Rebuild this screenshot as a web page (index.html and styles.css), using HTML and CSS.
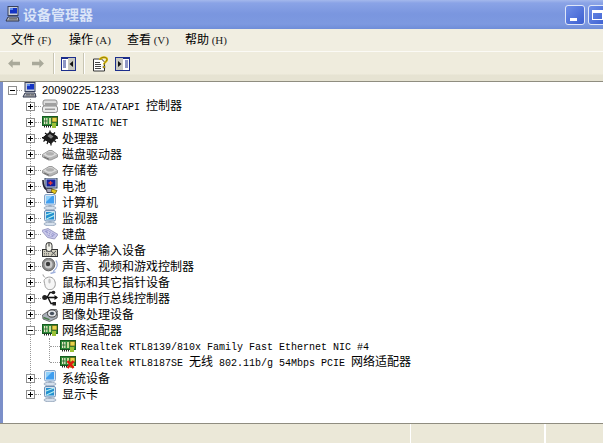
FILE: index.html
```html
<!DOCTYPE html>
<html lang="zh">
<head>
<meta charset="utf-8">
<title>设备管理器</title>
<link rel="stylesheet" href="styles.css">
</head>
<body>
<svg class="defs" width="0" height="0" aria-hidden="true">
  <symbol id="i-pc" viewBox="0 0 16 16"><rect x="3" y="0.500" width="10" height="9" fill="#c9cfdc" stroke="#39425c"/><rect x="5" y="2" width="7" height="5.500" fill="#1434c4"/><rect x="5" y="2" width="3" height="2" fill="#5f8cf0"/><path d="M1 15l2-4h10l1 4z" fill="#b9bdc8" stroke="#30364a"/><path d="M4 12.500h8M3.500 13.800h9" stroke="#555" stroke-width=".7"/></symbol>
  <symbol id="i-ide" viewBox="0 0 16 16"><rect x="1" y="2" width="14" height="6" rx="2" fill="#dcdcdc" stroke="#8c8c8c"/><rect x="0.500" y="8" width="15" height="6.500" rx="2" fill="#eaeaea" stroke="#8c8c8c"/><rect x="3" y="5" width="11" height="2" fill="#a0a0a0"/><rect x="3" y="10.500" width="10" height="1.500" fill="#9a9a9a"/></symbol>
  <symbol id="i-net" viewBox="0 0 16 16"><rect x="0.500" y="2.500" width="15" height="9" fill="#2f8a3a" stroke="#165c20"/><rect x="2" y="4" width="3.500" height="6" fill="#e6edc8"/><path d="M3.700 4v6M2 7h3.500" stroke="#1a5a22" stroke-width=".8"/><rect x="7" y="4" width="2" height="6" fill="#c9dc9a"/><rect x="10" y="3.500" width="5" height="4.500" fill="#e8d24a" stroke="#5a5a10" stroke-width=".7"/><path d="M2 12.500h11" stroke="#222" stroke-width="2" stroke-dasharray="1 1"/><rect x="10" y="9" width="4" height="5" fill="#9cc238"/></symbol>
  <symbol id="i-netx" viewBox="0 0 16 16"><use href="#i-net"/><path d="M7.500 7l6 7M13.500 7l-6 7" stroke="#e01a10" stroke-width="2.400"/></symbol>
  <symbol id="i-cpu" viewBox="0 0 16 16"><path d="M8 2l7.500 5-6.500 6.500-8.500-5.500z" fill="#1c1c1c" stroke="#111"/><path d="M5 4.500L3 3M8 2.500V.5M11 4.500L13 2.500M14 8l2 .5M12 10.500l2 1.500M9 13v2.500M6 11.500L5 14M3.500 9.500L1.500 11.500M1 7.500H-.5" stroke="#111" stroke-width="1.200"/><path d="M5.500 6l2.500-2 3.500 2.500-2.500 2.200z" fill="#808080"/></symbol>
  <symbol id="i-disk" viewBox="0 0 16 16"><path d="M0.500 8.500L7 4.500h3l5.500 4v2.500L9 14H6.500L.5 11z" fill="#b4b4b4" stroke="#8a8a8a" stroke-width=".8"/><path d="M1 8.500L7 5.200h3l5 3.300-6 2.800H6.500z" fill="#dcdcdc"/><ellipse cx="8" cy="7.800" rx="4" ry="1.800" fill="#b0b0b0"/><path d="M2 11l5 2.200" stroke="#6a6a6a"/></symbol>
  <symbol id="i-batt" viewBox="0 0 16 16"><rect x="3" y="0" width="12" height="10" fill="#c8d4e6" stroke="#30405c"/><rect x="4.500" y="1.500" width="9" height="7" fill="#14209c"/><path d="M8.500 3v4M6.500 5h4" stroke="#e63a3a" stroke-width="1.300"/><path d="M1 2c0 5 2 9 4 10l3 1.500" fill="none" stroke="#223" stroke-width="1.600"/><path d="M4.500 10.500H10l1 4H5z" fill="#a8a8b8" stroke="#445"/><path d="M10 11l5 1.500-2 3.500-4-2.500z" fill="#e8c81c" stroke="#5a4a00" stroke-width=".7"/></symbol>
  <symbol id="i-comp" viewBox="0 0 16 16"><rect x="2.500" y="0.500" width="11" height="10.500" rx="1.500" fill="#d8e6f4" stroke="#86a4c8"/><path d="M4 2h8v7.500H4z" fill="#3f9ef0"/><path d="M4 2h6L4 8z" fill="#8fd0fa"/><rect x="6.500" y="11" width="3" height="2" fill="#9db0c6"/><ellipse cx="8" cy="14" rx="6" ry="1.800" fill="#d6e0ec" stroke="#8a9db4" stroke-width=".8"/></symbol>
  <symbol id="i-mon" viewBox="0 0 16 16"><rect x="2.500" y="0.500" width="11" height="10.500" rx="1.500" fill="#d5e2f0" stroke="#6f8fb4"/><path d="M4 2h8v7.500H4z" fill="#2290d0"/><path d="M4 5L12 2M4.500 9L12 5.500" stroke="#b8f0f0" stroke-width="1.200"/><rect x="6.500" y="11" width="3" height="2" fill="#9db0c6"/><ellipse cx="8" cy="14" rx="6" ry="1.800" fill="#d6e0ec" stroke="#8a9db4" stroke-width=".8"/></symbol>
  <symbol id="i-kbd" viewBox="0 0 16 16"><path d="M-.5 4.500L6 2.500l10 6-3.500 4.500-7-1.500z" fill="#c8c8ea" stroke="#8c8cb8" stroke-width=".8"/><path d="M2.500 5l3.500-1 7 4.500-2.500 2.500-4.500-1z" fill="#9c9cd0"/><path d="M3 6.500l7 3.500M5 5l6.500 4M7 4.500L6 9.500M9.500 6L8 10.500" stroke="#ececfa" stroke-width=".5"/></symbol>
  <symbol id="i-hid" viewBox="0 0 16 16"><rect x="0.500" y="7.500" width="15" height="7" fill="#cfccbc" stroke="#333"/><path d="M2 9.500h5M2 11.500h5M2 13h5" stroke="#777" stroke-dasharray="1 1"/><path d="M9 9l5 4.500M9 13.500l5-4.500" stroke="#555"/><rect x="4" y="0.500" width="6" height="9" rx="2.800" fill="#f2f2ea" stroke="#333"/><path d="M7 .5v4" stroke="#333"/></symbol>
  <symbol id="i-snd" viewBox="0 0 16 16"><circle cx="6.500" cy="6.500" r="6.300" fill="#8a8a8a" stroke="#666"/><circle cx="6.500" cy="6.500" r="4" fill="#c9c9c9"/><circle cx="6" cy="6" r="2.200" fill="#3c3c3c"/><path d="M14 2.500c2 3.500 1.500 8-3 11M8.500 15.500l5-1.500" fill="none" stroke="#9fb0dc" stroke-width="1.400"/></symbol>
  <symbol id="i-mouse" viewBox="0 0 16 16"><path d="M2.500 5.500c3-3.500 7.500-3 9.500 0s2 7.500-1.500 9.500-7-.5-7.500-3.500S1.500 7 2.500 5.500z" fill="#f6f6f6" stroke="#9c9c9c"/><ellipse cx="7.500" cy="7" rx="1.200" ry="2.500" fill="#c0c0c0"/><path d="M3 3.500C2 2.500 1 1.500 1 .5" fill="none" stroke="#8a8a8a"/></symbol>
  <symbol id="i-usb" viewBox="0 0 16 16"><path d="M1 7.500h14" stroke="#111" stroke-width="1.600"/><path d="M16 7.500L12.500 5v5z" fill="#111"/><circle cx="2.700" cy="7.500" r="2.500" fill="#222"/><path d="M5 7.500l3-5h3M6 7.500l3 6h2.500" fill="none" stroke="#111" stroke-width="1.400"/><circle cx="11.500" cy="2.500" r="1.800" fill="#222"/><rect x="10.500" y="12" width="3.500" height="3.500" fill="#222"/></symbol>
  <symbol id="i-cam" viewBox="0 0 16 16"><path d="M.5 9l8.500-5.500h5.500l1.500 3-1 5.500-7.500 3.500-6.500-2.500z" fill="#aab0ba" stroke="#555" stroke-width=".8"/><ellipse cx="10" cy="7.500" rx="4.500" ry="3.600" fill="#e4e6ea" stroke="#444"/><ellipse cx="10" cy="7.500" rx="2.200" ry="1.800" fill="#48525f"/><path d="M1.500 11.500l6 2.200" stroke="#4a7a4a" stroke-width="1.400"/></symbol>
  <symbol id="i-back" viewBox="0 0 14 12"><path d="M0 6l5-5v3h8v4H5v3z" fill="#a9a99a"/></symbol>
  <symbol id="i-fwd" viewBox="0 0 14 12"><path d="M14 6L9 1v3H1v4h8v3z" fill="#a9a99a"/></symbol>
  <symbol id="i-pane-l" viewBox="0 0 15 14"><rect x="0.500" y="0.500" width="14" height="13" fill="#fff" stroke="#1c2e8c"/><rect x="0" y="0" width="15" height="2" fill="#1c2e8c"/><rect x="7" y="1" width="7" height="12" fill="#c8c8c0"/><path d="M2 4h3M2 6h3M2 8h3M2 10h3" stroke="#1c2e8c"/><path d="M12 4v6L8.500 7z" fill="#111"/></symbol>
  <symbol id="i-pane-r" viewBox="0 0 15 14"><rect x="0.500" y="0.500" width="14" height="13" fill="#fff" stroke="#1c2e8c"/><rect x="0" y="0" width="15" height="2" fill="#1c2e8c"/><rect x="1" y="1" width="7" height="12" fill="#c8c8c0"/><path d="M10 4h3M10 6h3M10 8h3M10 10h3" stroke="#1c2e8c"/><path d="M3 4v6L6.500 7z" fill="#111"/></symbol>
  <symbol id="i-help" viewBox="0 0 16 16"><path d="M1.500 3.500h8l3 3V15.500h-11z" fill="#fff" stroke="#333"/><path d="M3 7h5M3 9h6M3 11h6M3 13h6" stroke="#444"/><path d="M8 4.500C8 1.500 15 .5 15 4c0 2.500-3 2.500-3 5" fill="none" stroke="#e8c400" stroke-width="2.200"/><path d="M8 4.500C8 1.500 15 .5 15 4c0 2.500-3 2.500-3 5" fill="none" stroke="#333" stroke-width=".5"/><rect x="11" y="10.500" width="2" height="2" fill="#e8c400" stroke="#333" stroke-width=".4"/></symbol>
</svg>

<div class="window">
  <header class="titlebar">
    <svg class="ico"><use href="#i-pc"/></svg>
    <span class="title">设备管理器</span>
    <div class="winbtns">
      <button class="winbtn" type="button"><span class="glyph-min"></span></button>
      <button class="winbtn winbtn-max" type="button"><span class="glyph-max"></span></button>
    </div>
  </header>

  <nav class="menubar">
    <span class="menu">文件 <span class="key">(F)</span></span>
    <span class="menu">操作 <span class="key">(A)</span></span>
    <span class="menu">查看 <span class="key">(V)</span></span>
    <span class="menu">帮助 <span class="key">(H)</span></span>
  </nav>

  <div class="toolbar">
    <svg class="tb-arrow"><use href="#i-back"/></svg>
    <svg class="tb-arrow tb-arrow-2"><use href="#i-fwd"/></svg>
    <span class="tb-sep"></span>
    <svg class="tb-icon"><use href="#i-pane-l"/></svg>
    <span class="tb-sep tb-sep-2"></span>
    <svg class="tb-help"><use href="#i-help"/></svg>
    <svg class="tb-icon tb-icon-last"><use href="#i-pane-r"/></svg>
  </div>

  <main class="tree">
    <span class="vline"></span>
    <span class="vline-sub"></span>

    <div class="row row-root"><span class="exp exp-minus"></span><span class="dots dots-root"></span><svg class="ico"><use href="#i-pc"/></svg><span class="label label-root">20090225-1233</span></div>

    <div class="row"><span class="exp"></span><span class="dots"></span><svg class="ico"><use href="#i-ide"/></svg><span class="label"><span class="lat">IDE ATA/ATAPI </span>控制器</span></div>
    <div class="row"><span class="exp"></span><span class="dots"></span><svg class="ico"><use href="#i-net"/></svg><span class="label"><span class="lat">SIMATIC NET</span></span></div>
    <div class="row"><span class="exp"></span><span class="dots"></span><svg class="ico"><use href="#i-cpu"/></svg><span class="label">处理器</span></div>
    <div class="row"><span class="exp"></span><span class="dots"></span><svg class="ico"><use href="#i-disk"/></svg><span class="label">磁盘驱动器</span></div>
    <div class="row"><span class="exp"></span><span class="dots"></span><svg class="ico"><use href="#i-disk"/></svg><span class="label">存储卷</span></div>
    <div class="row"><span class="exp"></span><span class="dots"></span><svg class="ico"><use href="#i-batt"/></svg><span class="label">电池</span></div>
    <div class="row"><span class="exp"></span><span class="dots"></span><svg class="ico"><use href="#i-comp"/></svg><span class="label">计算机</span></div>
    <div class="row"><span class="exp"></span><span class="dots"></span><svg class="ico"><use href="#i-mon"/></svg><span class="label">监视器</span></div>
    <div class="row"><span class="exp"></span><span class="dots"></span><svg class="ico"><use href="#i-kbd"/></svg><span class="label">键盘</span></div>
    <div class="row"><span class="exp"></span><span class="dots"></span><svg class="ico"><use href="#i-hid"/></svg><span class="label">人体学输入设备</span></div>
    <div class="row"><span class="exp"></span><span class="dots"></span><svg class="ico"><use href="#i-snd"/></svg><span class="label">声音、视频和游戏控制器</span></div>
    <div class="row"><span class="exp"></span><span class="dots"></span><svg class="ico"><use href="#i-mouse"/></svg><span class="label">鼠标和其它指针设备</span></div>
    <div class="row"><span class="exp"></span><span class="dots"></span><svg class="ico"><use href="#i-usb"/></svg><span class="label">通用串行总线控制器</span></div>
    <div class="row"><span class="exp"></span><span class="dots"></span><svg class="ico"><use href="#i-cam"/></svg><span class="label">图像处理设备</span></div>
    <div class="row"><span class="exp exp-minus"></span><span class="dots"></span><svg class="ico"><use href="#i-net"/></svg><span class="label">网络适配器</span></div>
    <div class="row row-sub"><span class="dots dots-sub"></span><svg class="ico"><use href="#i-net"/></svg><span class="label label-sub"><span class="lat">Realtek RTL8139/810x Family Fast Ethernet NIC #4</span></span></div>
    <div class="row row-sub"><span class="dots dots-sub"></span><svg class="ico"><use href="#i-netx"/></svg><span class="label label-sub"><span class="lat">Realtek RTL8187SE </span>无线<span class="lat"> 802.11b/g 54Mbps PCIE </span>网络适配器</span></div>
    <div class="row"><span class="exp"></span><span class="dots"></span><svg class="ico"><use href="#i-comp"/></svg><span class="label">系统设备</span></div>
    <div class="row"><span class="exp"></span><span class="dots"></span><svg class="ico"><use href="#i-mon"/></svg><span class="label">显示卡</span></div>
  </main>

  <footer class="statusbar">
    <span class="status-cell status-main"></span>
    <span class="status-cell status-mid"></span>
    <span class="status-cell"></span>
  </footer>
</div>
</body>
</html>
```
FILE: styles.css
```css
* { box-sizing: border-box; }
html, body { margin: 0; padding: 0; height: 100%; overflow: hidden; background: #fff; }
.defs { position: absolute; }
body { font-family: "Noto Sans CJK SC", "Liberation Sans", sans-serif; font-size: 12px; color: #000; }
.window { width: 603px; height: 443px; display: flex; flex-direction: column; }
.ico { width: 16px; height: 16px; flex: none; display: block; }
.lat { font-family: "Liberation Mono", monospace; font-size: 10px; white-space: pre; }
.key { font-family: "Liberation Serif", serif; font-size: 11px; color: #222; }

.titlebar { height: 29px; flex: none; display: flex; align-items: center; padding: 1px 0 0 5px;
  background: linear-gradient(#a4b8ec 0, #8aa3e6 3px, #7a96df 14px, #7d99e0 24px, #6f8dd8 29px); }
.titlebar .ico { margin-top: -2px; }
.title { margin-left: 2px; margin-top: -3px; font-size: 14px; font-weight: 700; color: #dbe5f8; }
.winbtns { margin-left: auto; display: flex; gap: 3px; align-items: center; margin-top: -1px; width: 38px; overflow: hidden; flex: none; }
.winbtn { width: 20px; height: 20px; flex: none; padding: 0; border: 1px solid #dfe7f8; border-radius: 3px; background: linear-gradient(135deg, #6f8fe8, #3c5fd0); }
.glyph-min { display: block; width: 7px; height: 3px; background: #fff; margin: 10px 0 0 4px; }
.glyph-max { display: block; width: 11px; height: 10px; border: 1px solid #fff; border-top-width: 3px; margin: 0 0 0 3px; }

.menubar { height: 23px; flex: none; display: flex; align-items: center; padding: 0 0 1px 11px; background: #f1eee1; border-bottom: 1px solid #fbfaf5; }
.menu { width: 58px; flex: none; white-space: pre; line-height: 16px; }

.toolbar { height: 30px; flex: none; display: flex; align-items: center; padding: 0 0 6px 8px; background: linear-gradient(#efecdd 0, #efecdd 22px, #e6e3d2 23px, #e6e3d2 29px); border-bottom: 1px solid #8f8d80; }
.tb-arrow { width: 13px; height: 11px; flex: none; display: block; }
.tb-arrow-2 { margin-left: 10px; }
.tb-sep { width: 2px; height: 21px; flex: none; margin-left: 9px; border-left: 1px solid #c8c5b3; border-right: 1px solid #fff; }
.tb-sep-2 { margin-left: 7px; }
.tb-icon { width: 15px; height: 14px; flex: none; display: block; margin-left: 6px; }
.tb-help { width: 16px; height: 17px; flex: none; display: block; margin-left: 7px; }
.tb-icon-last { margin-left: 7px; }

.tree { flex: 1; position: relative; background: #fff; border-left: 3px solid #7b8fc9; }
.vline { position: absolute; left: 27px; top: 12px; height: 300px; border-left: 1px dotted #9a9a9a; }
.vline-sub { position: absolute; left: 46px; top: 256px; height: 24px; border-left: 1px dotted #9a9a9a; }
.row { height: 16px; display: flex; align-items: center; padding-left: 23px; white-space: nowrap; }
.row-root { padding-left: 5px; }
.row-sub { padding-left: 47px; }
.exp { width: 9px; height: 9px; flex: none; border: 1px solid #8f8f8f; background: #fff; position: relative; z-index: 1; }
.exp::before { content: ""; position: absolute; left: 1px; top: 3px; width: 5px; height: 1px; background: #000; }
.exp::after { content: ""; position: absolute; left: 3px; top: 1px; width: 1px; height: 5px; background: #000; }
.exp-minus::after { display: none; }
.dots { width: 6px; flex: none; margin-right: 1px; border-top: 1px dotted #9a9a9a; }
.dots-root { width: 5px; margin-right: 0; }
.dots-sub { width: 10px; margin-right: 0; }
.label { margin-left: 4px; line-height: 16px; }
.label-root { font-family: "Liberation Sans", sans-serif; font-size: 11px; }
.label-sub { margin-left: 5px; }

.statusbar { height: 20px; flex: none; display: flex; background: #ebe8d8; border-top: 1px solid #8f8d80; }
.status-cell { display: block; height: 100%; border-right: 1px solid #fff; }
.status-main { width: 411px; }
.status-mid { width: 134px; }
```
